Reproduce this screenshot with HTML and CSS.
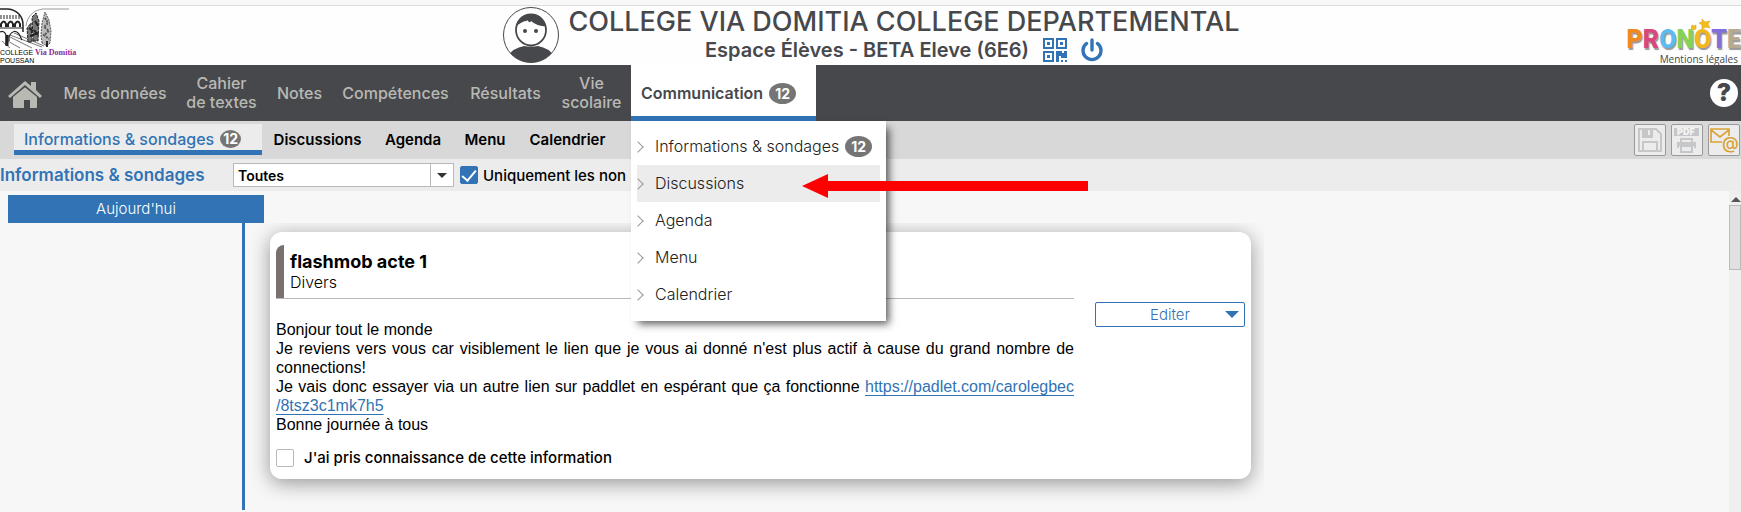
FILE: index.html
```html
<!DOCTYPE html>
<html lang="fr">
<head>
  <meta charset="UTF-8">
  <meta name="viewport" content="width=device-width, initial-scale=1.0">
  <title>PRONOTE - Espace Élèves</title>
  <link rel="stylesheet" href="styles.css">
</head>
<body>

  <!-- Bandeau -->
  <header class="bandeau">
    <div class="logo-college">
      <svg class="dessin" width="74" height="41" viewBox="0 0 74 41" fill="none" stroke="#222">
        <path d="M0 1h8c9 1 15 7 15 16v7" stroke-width="1.5"/>
        <path d="M26 18c1-9 7-16 17-17h26" stroke="#999"/>
        <path d="M0 8h20M0 10h21" stroke-dasharray="2 1"/>
        <path d="M1 19v-3q3-5 5 0v3M8 19v-3q3-5 5 0v3M15 19v-3q3-5 5 0v3" stroke-width="2"/>
        <path d="M0 20h23M0 24q4-2 6 3v10M9 33V28q5-8 10-2l3 6" stroke-width="1.2"/>
        <path d="M7 27v11" stroke-width="3"/>
        <path d="M8 28l24 12M10 27l32 12M6 32l14 8M14 25l30 13M2 33l8 7" stroke-width=".6"/>
        <path d="M28 34l-1-14 4-5 1 19zM33 33l-1-24 4-4 3 8-1 20z" fill="#777" stroke-dasharray="3 1"/>
        <path d="M29 20l4 3M35 13l3 5M30 28l8-3M34 22l4 5" stroke-width="2"/>
        <path d="M42 35l-1-8 1-12 3-11 4 8 2 11-1 12-3 3z" fill="#bbb" stroke="#555" stroke-dasharray="2 1"/>
        <path d="M45 10l3 5-4 4 5 4-5 4 5 4" stroke="#555" stroke-width="2" stroke-dasharray="2 1"/>
        <path d="M47 33v6" stroke-width="2"/>
      </svg>
      <div class="nom-college">COLLEGE <span class="via">Via Domitia</span></div>
      <div class="nom-college">POUSSAN</div>
    </div>

    <div class="identite">
      <svg class="avatar" width="58" height="58" viewBox="0 0 58 58">
        <defs><clipPath id="rond"><circle cx="29" cy="29" r="27.5"/></clipPath></defs>
        <circle cx="29" cy="29" r="27.5" fill="#fff" stroke="#47484c"/>
        <path clip-path="url(#rond)" d="M6 50q5-8 16-10q7 1 14 0q11 2 16 10v9H6z" fill="#47484c"/>
        <ellipse cx="29" cy="24" rx="15" ry="15.500" fill="#fff" stroke="#47484c" stroke-width="1.8"/>
        <path d="M14 20q3-12 15-12t15 12q-8 1-15-5q-1 2-2 1l-2-2q0 2-2 1q-3 1-9 5z" fill="#47484c"/>
        <circle cx="23" cy="25" r="2" fill="#47484c"/>
        <circle cx="34" cy="25" r="2" fill="#47484c"/>
      </svg>
      <div class="titres">
        <h1>COLLEGE VIA DOMITIA COLLEGE DEPARTEMENTAL</h1>
        <div class="espace">
          <span>Espace Élèves - BETA Eleve (6E6)</span>
          <button class="btn-icone" type="button" aria-label="QR code">
            <svg width="24" height="24" viewBox="0 0 24 24" fill="#3173b5">
              <path fill-rule="evenodd" d="M0 0h11v11H0zM2 2v7h7V2zM13 0h11v11H13zM15 2v7h7V2zM0 13h11v11H0zM2 15v7h7v-7z"/>
              <path d="M4 4h3v3H4zM17 4h3v3h-3zM4 17h3v3H4zM13 13h6v2h2v-2h3v7h-6v-2h-2v6h-3zM18 22h2v2h-2zM22 22h2v2h-2z"/>
            </svg>
          </button>
          <button class="btn-icone" type="button" aria-label="Se déconnecter">
            <svg width="22" height="24" viewBox="0 0 22 24" fill="none" stroke="#3173b5" stroke-width="3.4" stroke-linecap="round">
              <path d="M5.500 5.500a9 9 0 1 0 11 0M11 2v10"/>
            </svg>
          </button>
        </div>
      </div>
    </div>

    <div class="marque">
      <div class="pronote" aria-label="PRONOTE">
        <span class="p1">P</span><span class="p2">R</span><span class="p3">O</span><span class="p4">N</span><span class="p5">O</span><span class="p6">T</span><span class="p7">E</span>
        <svg class="etoiles" width="20" height="12" viewBox="0 0 20 12" fill="#f5bd1c" stroke="#d99a10" stroke-width=".5">
          <path d="M11 0l3 3 5-1-2 3 2 4-4-1-4 2v-4L8 4l3-1zM1 6l2 1 2-1v4l-3 1-2-2z"/>
        </svg>
      </div>
      <a class="mentions" href="#">Mentions légales</a>
    </div>
  </header>

  <!-- Menu principal -->
  <nav class="menu">
    <a class="accueil" href="#" aria-label="Accueil">
      <svg width="34" height="28" viewBox="0 0 34 28">
        <path d="M5 15L17 5l12 10v11q0 1-1 1h-6v-8h-6v8H6q-1 0-1-1z" fill="#b9b9b4"/>
        <path d="M1 16L17 3l16 13" fill="none" stroke="#47484c" stroke-width="5"/>
        <path d="M17 0l6 5V1h5v8l6 6-2 2L17 4 2 17l-2-2z" fill="#b9b9b4"/>
      </svg>
    </a>
    <a href="#">Mes données</a>
    <a href="#">Cahier<br>de textes</a>
    <a href="#">Notes</a>
    <a href="#">Compétences</a>
    <a href="#">Résultats</a>
    <a href="#">Vie<br>scolaire</a>
    <div class="onglet-ouvert">
      <a class="actif" href="#">Communication <span class="badge">12</span></a>
      <ul class="sous-menu">
        <li><a href="#">Informations &amp; sondages <span class="badge">12</span></a></li>
        <li><a class="survol" href="#">Discussions</a></li>
        <li><a href="#">Agenda</a></li>
        <li><a href="#">Menu</a></li>
        <li><a href="#">Calendrier</a></li>
      </ul>
      <svg class="fleche" width="287" height="26" viewBox="0 0 287 26" fill="#f00">
        <path d="M0 13L26 1v7h260v10H26v7z"/>
      </svg>
    </div>
    <button class="aide" type="button" aria-label="Aide">?</button>
  </nav>

  <!-- Onglets -->
  <nav class="onglets">
    <a class="courant" href="#">Informations &amp; sondages <span class="badge">12</span></a>
    <a href="#">Discussions</a>
    <a href="#">Agenda</a>
    <a href="#">Menu</a>
    <a href="#">Calendrier</a>
    <div class="outils">
      <button type="button" aria-label="Enregistrer" disabled>
        <svg width="24" height="24" viewBox="0 0 24 24" fill="none" stroke="#c6c7c9" stroke-width="2">
          <path d="M1 1h17l5 5v17H1zM5 23v-9h14v9"/>
          <path d="M5 1h9v8H5z" fill="#c6c7c9"/>
          <path d="M11 2v5" stroke="#ececec"/>
        </svg>
      </button>
      <button type="button" aria-label="Imprimer en PDF" disabled>
        <svg width="26" height="26" viewBox="0 0 26 26">
          <path d="M0 1h25v8H0z" fill="#c6c7c9"/>
          <text class="pdf" x="3" y="8" fill="#f4f4f4">PDF</text>
          <path d="M7 15v-3h11v3M4 21v-5h17v5M7 19h11v6H7z" fill="none" stroke="#c6c7c9" stroke-width="2"/>
          <path d="M4 15h17v4H4z" fill="#c6c7c9"/>
        </svg>
      </button>
      <button type="button" aria-label="Envoyer un message">
        <svg width="29" height="26" viewBox="0 0 29 26" fill="none" stroke="#d9a233" stroke-width="1.6">
          <path d="M12 15H1V2h18v7M1 3l9 7 9-7"/>
          <text class="arobase" x="12" y="22" fill="#d9a233" stroke="none">@</text>
        </svg>
      </button>
    </div>
  </nav>

  <!-- Filtres -->
  <div class="filtres">
    <h2>Informations &amp; sondages</h2>
    <div class="liste">
      <select aria-label="Catégorie">
        <option>Toutes</option>
      </select>
      <svg class="chevron" width="24" height="22" viewBox="0 0 24 22"><path d="M0 0v22" stroke="#b9b9b9" stroke-width="2"/><path d="M7 9h10l-5 5z" fill="#333"/></svg>
    </div>
    <label class="choix"><input class="case" type="checkbox" checked> Uniquement les non</label>
  </div>

  <!-- Fil des informations -->
  <main class="contenu">
    <div class="jour">
      <div class="date">Aujourd'hui</div>
      <div class="trait"></div>
    </div>
    <div class="fil">
      <article class="carte">
        <div class="texte">
          <div class="entete">
            <h3>flashmob acte 1</h3>
            <p>Divers</p>
          </div>
          <div class="message">
            <p>Bonjour tout le monde</p>
            <p>Je reviens vers vous car visiblement le lien que je vous ai donné n'est plus actif à cause du grand nombre de connections!</p>
            <p>Je vais donc essayer via un autre lien sur paddlet en espérant que ça fonctionne <a href="#">https://padlet.com/carolegbec<wbr>/8tsz3c1mk7h5</a></p>
            <p>Bonne journée à tous</p>
          </div>
          <label class="choix accuse"><input class="case" type="checkbox"> J'ai pris connaissance de cette information</label>
        </div>
        <button class="editer" type="button">
          <span>Editer</span>
          <svg width="14" height="8" viewBox="0 0 14 8" fill="#3173b5"><path d="M0 0h14L7 7z"/></svg>
        </button>
      </article>
    </div>
    <div class="ascenseur">
      <svg width="10" height="6" viewBox="0 0 10 6" fill="#555"><path d="M0 5l5-5 5 5z"/></svg>
      <div class="curseur"></div>
    </div>
  </main>

</body>
</html>
```

FILE: styles.css
```css
* {
  box-sizing: border-box;
}

body {
  margin: 0;
  height: 100vh;
  display: flex;
  flex-direction: column;
  overflow: hidden;
  background-color: #f7f7f7;
  font-family: Inter, "Open Sans", sans-serif;
  font-size: 15px;
  color: #000;
}

h1, h2, h3, p, ul {
  margin: 0;
  padding: 0;
}

a {
  color: inherit;
  text-decoration: none;
}

button {
  font-family: inherit;
  padding: 0;
  cursor: pointer;
}

svg {
  display: block;
  flex: none;
}

.badge {
  display: inline-block;
  padding: 0 6px;
  border-radius: 50%;
  background-color: #757575;
  color: #fff;
  font-size: 14px;
  line-height: 21px;
  font-weight: 700;
}

/* Bandeau */
.bandeau {
  flex: none;
  height: 65px;
  display: grid;
  grid-template-columns: 1fr auto 1fr;
  border-top: 5px solid #f8f8f8;
  background-color: #fefefe;
  box-shadow: inset 0 1px #ddd;
}

.logo-college {
  padding-top: 3px;
}

.nom-college {
  font-family: "Liberation Sans", sans-serif;
  font-size: 7px;
  line-height: 8px;
  white-space: nowrap;
}

.via {
  font-family: "Liberation Serif", serif;
  font-size: 8px;
  font-weight: 700;
  color: #8e2a96;
}

.identite {
  display: flex;
  gap: 9px;
}

.avatar {
  margin-top: 1px;
}

.titres {
  color: #47484c;
  text-align: center;
}

h1 {
  font-size: 27px;
  line-height: 32px;
  font-weight: 500;
  padding-top: 1px;
}

.espace {
  display: flex;
  justify-content: center;
  align-items: center;
  gap: 14px;
  font-size: 20px;
  line-height: 24px;
  font-weight: 600;
}

.btn-icone {
  border: none;
  background: none;
}

.marque {
  display: flex;
  flex-direction: column;
  align-items: flex-end;
  padding-top: 21px;
}

.pronote {
  position: relative;
  display: flex;
  font-size: 25px;
  line-height: 28px;
  font-weight: 900;
  font-family: Roboto, sans-serif;
  text-shadow: 1px 2px 1px #999;
}

.etoiles {
  position: absolute;
  left: 64px;
  top: -7px;
}

.p1 { color: #f08a1d; }
.p2 { color: #d9487d; }
.p3 { color: #5cbcf0; }
.p4 { color: #86d354; }
.p5 { color: #f5b51c; }
.p6 { color: #8070d8; }
.p7 { color: #b5ab92; }

.mentions {
  padding-right: 3px;
  font-family: "Open Sans", sans-serif;
  font-size: 10px;
  line-height: 10px;
  color: #47484c;
}

/* Menu principal */
.menu {
  flex: none;
  height: 56px;
  display: grid;
  grid-template-columns: 54px 122px 91px 65px 127px 93px 79px 185px 1fr;
  background-color: #47484c;
  color: #b9b9b4;
  font-size: 16px;
  font-weight: 500;
  line-height: 19px;
  text-align: center;
}

.menu > a {
  display: flex;
  align-items: center;
  justify-content: center;
}

.menu .accueil {
  justify-content: flex-start;
  padding-left: 8px;
  padding-top: 4px;
}

.onglet-ouvert {
  position: relative;
}

.actif {
  display: flex;
  align-items: center;
  gap: 6px;
  height: 56px;
  padding: 5px 10px 0;
  background-color: #fff;
  border-bottom: 5px solid #3173b5;
  color: #47484c;
  font-weight: 600;
}

.sous-menu {
  position: absolute;
  z-index: 1;
  left: 0;
  top: 56px;
  width: 255px;
  height: 200px;
  display: flex;
  flex-direction: column;
  padding: 7px 6px;
  list-style: none;
  background-color: #fff;
  box-shadow: 5px 5px 8px -2px rgba(0,0,0,0.65);
  color: #222;
  font-weight: 300;
}

.sous-menu a {
  display: flex;
  align-items: center;
  gap: 6px;
  height: 37px;
  white-space: nowrap;
}

.sous-menu a::before {
  content: "";
  width: 7px;
  height: 7px;
  margin: 0 7px 0 -3px;
  border: solid #999;
  border-width: 1px 1px 0 0;
  transform: rotate(45deg);
}

.sous-menu .survol {
  background-color: #ececec;
}

.fleche {
  position: absolute;
  z-index: 2;
  left: 171px;
  top: 108px;
}

.aide {
  justify-self: end;
  align-self: center;
  width: 28px;
  height: 28px;
  margin-right: 3px;
  border: none;
  border-radius: 50%;
  background-color: #fff;
  color: #47484c;
  font-size: 24px;
  line-height: 28px;
  font-weight: 900;
}

/* Onglets */
.onglets {
  flex: none;
  height: 38px;
  display: grid;
  grid-template-columns: 248px 111px 80px 64px 101px 1fr;
  padding: 3px 1px 3px 14px;
  background-color: #d8d8d8;
  font-weight: 600;
  line-height: 31px;
  text-align: center;
}

.courant {
  display: flex;
  align-items: center;
  align-self: start;
  gap: 6px;
  height: 31px;
  padding: 4px 0 0 10px;
  background-color: #ececec;
  border-bottom: 5px solid #3173b5;
  color: #3173b5;
  font-size: 16px;
  font-weight: 500;
}

.courant .badge {
  padding: 0 3px;
  line-height: 18px;
}

.outils {
  display: flex;
  justify-content: flex-end;
  gap: 5px;
}

.outils button {
  display: flex;
  align-items: center;
  justify-content: center;
  width: 32px;
  height: 32px;
  border: 1px solid #999;
  border-radius: 2px;
  background-color: #ececec;
}

.pdf {
  font-size: 9px;
  font-weight: 900;
}

.arobase {
  font-size: 17px;
  font-weight: 500;
}

/* Filtres */
.filtres {
  flex: none;
  height: 32px;
  display: flex;
  align-items: center;
  background-color: #ececec;
}

h2 {
  width: 233px;
  font-size: 17px;
  font-weight: 600;
  color: #3173b5;
  white-space: nowrap;
}

.liste {
  display: grid;
  width: 221px;
  margin-right: 6px;
}

.liste > * {
  grid-area: 1 / 1;
}

select {
  appearance: none;
  height: 24px;
  padding: 0 4px;
  border: 1px solid #b9b9b9;
  border-radius: 0;
  background-color: #fff;
  font-family: inherit;
  font-size: 14px;
  font-weight: 600;
  color: #000;
}

.chevron {
  justify-self: end;
  align-self: center;
  pointer-events: none;
}

.choix {
  display: flex;
  align-items: center;
  gap: 5px;
  font-size: 15px;
  font-weight: 500;
  white-space: nowrap;
}

.case {
  appearance: none;
  width: 18px;
  height: 18px;
  margin: 0;
  border: 1px solid #b9b9b9;
  border-radius: 2px;
  background-color: #fff;
}

.case:checked {
  display: flex;
  justify-content: center;
  border-color: #3173b5;
  background-color: #3173b5;
}

.case:checked::before {
  content: "";
  width: 6px;
  height: 12px;
  border: solid #fff;
  border-width: 0 2px 2px 0;
  transform: rotate(40deg);
}

/* Fil des informations */
.contenu {
  flex: 1;
  display: flex;
  min-height: 0;
}

.jour {
  flex: none;
  width: 245px;
  display: flex;
  flex-direction: column;
  padding: 4px 0 2px 8px;
}

.date {
  width: 256px;
  height: 28px;
  line-height: 28px;
  background-color: #3173b5;
  color: #fff;
  font-weight: 300;
  text-align: center;
}

.trait {
  flex: 1;
  align-self: flex-end;
  width: 3px;
  background-color: #3173b5;
}

.fil {
  flex: 0 1 1019px;
  margin-top: 32px;
  padding: 9px 13px 0 25px;
  overflow: hidden;
}

.carte {
  display: flex;
  align-items: flex-start;
  justify-content: space-between;
  padding: 13px 6px 12px;
  border-radius: 12px;
  background-color: #fff;
  box-shadow: 0 4px 20px rgba(0,0,0,0.4);
}

.texte {
  flex: 0 1 798px;
}

.entete {
  border-bottom: 1px solid #b9b9b9;
  background: linear-gradient(#7b7070, #7b7070) left / 8px no-repeat;
  border-radius: 8px 0 0 0;
  padding: 6px 0 6px 14px;
}

h3 {
  font-size: 18px;
  line-height: 22px;
  font-weight: 700;
}

.entete p {
  font-size: 16px;
  line-height: 19px;
  font-weight: 300;
}

.message {
  margin: 21px 0 14px;
  font-family: "Liberation Sans", Arial, sans-serif;
  font-size: 16px;
  line-height: 19px;
  text-align: justify;
}

.message a {
  color: #3173b5;
  text-decoration: underline;
  text-underline-offset: 3px;
}

.accuse {
  gap: 10px;
}

.editer {
  display: grid;
  grid-template-columns: 1fr auto;
  align-items: center;
  width: 150px;
  height: 25px;
  margin-top: 57px;
  padding: 0 5px 0 19px;
  border: 1px solid #3173b5;
  border-radius: 2px;
  background-color: #fff;
  color: #3173b5;
  font-size: 15px;
  font-weight: 300;
}

.ascenseur {
  width: 12px;
  margin-left: auto;
  padding-top: 6px;
  background-color: #efefef;
}

.ascenseur svg {
  margin-left: 2px;
}

.curseur {
  height: 65px;
  margin-top: 2px;
  border: 1px solid #bbb;
  background-color: #e1e1e1;
}
```
